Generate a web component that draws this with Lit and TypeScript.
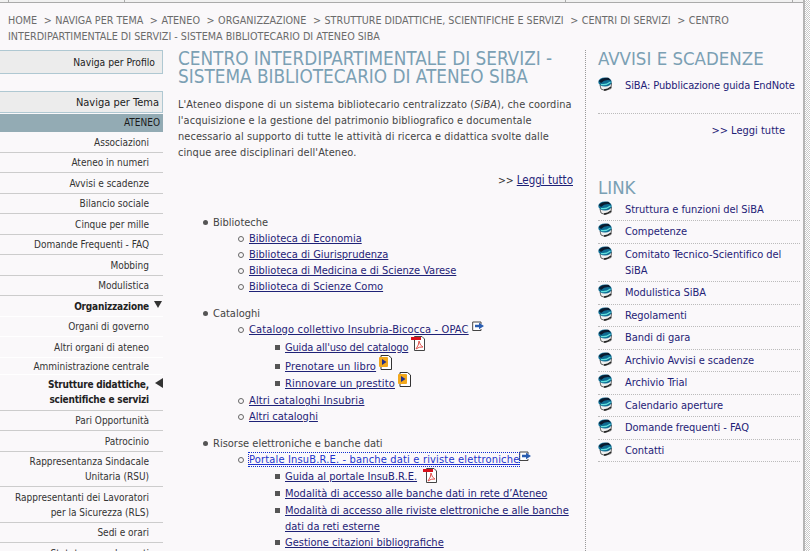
import { LitElement, html, css, svg } from "lit";
import { customElement } from "lit/decorators.js";

const globe = html`<svg class="gi" width="15" height="14" viewBox="0 0 15 14"><path d="M2 8 L3 12 L7 13.500 L13 11.500 L13.500 6Z" fill="#efefef" stroke="#555" stroke-width=".9"/><path d="M6 13 Q10 12.500 13 10" stroke="#222" stroke-width="1.300" fill="none"/><ellipse cx="7" cy="5" rx="6.700" ry="4.500" fill="#0e6d94"/><path d="M.8 4 Q4.500 .3 10.500 .8 L13 3.500 Q7 2 3 6Z" fill="#0a1c30"/><path d="M3 7.500 Q8 8.500 12.500 5" stroke="#62e0dc" stroke-width="1.200" fill="none"/></svg>`;
const pdfShape = svg`<path d="M3.500 .5H11l2.500 2.500V14.500H3.500Z" fill="#fff" stroke="#444"/><rect x="0" y="1" width="10" height="3" fill="#d8101c"/><path d="M5 13 Q8 9 8 5 Q9 10 12 11 Q8 10.500 5 13Z" fill="none" stroke="#e2534f"/>`;
const pdf = html`<svg class="ic" width="14" height="15" viewBox="0 0 14 15">${pdfShape}</svg>`;
const pdfLow = html`<svg class="ic low" width="14" height="15" viewBox="0 0 14 15">${pdfShape}</svg>`;
const ext = html`<svg class="ic ex" width="13" height="11" viewBox="0 0 13 11"><path d="M9 3V1H.7V9.500H9V8" fill="#fff" stroke="#444"/><path d="M3 3.800H7V1.800L12 5 7 8.200V6.200H3Z" fill="#2a5db0"/></svg>`;
const gold = html`<svg class="ic" width="13" height="15" viewBox="0 0 13 15"><path d="M2 .5H9.500L12.500 3V14.500H2Z" fill="#fff" stroke="#333"/><rect x="0" y="2" width="9" height="10" rx="1" fill="#f2a81d"/><path d="M3 4L7.500 7 3 10Z" fill="#23308a"/></svg>`;

const menuA = ["Associazioni","Ateneo in numeri","Avvisi e scadenze","Bilancio sociale","Cinque per mille","Domande Frequenti - FAQ","Mobbing","Modulistica"];
const menuB = ["Pari Opportunità","Patrocinio","Rappresentanza Sindacale Unitaria (RSU)","Rappresentanti dei Lavoratori per la Sicurezza (RLS)","Sedi e orari","Statuto e regolamenti"];
const links = ["Struttura e funzioni del SiBA","Competenze","Comitato Tecnico-Scientifico del SiBA","Modulistica SiBA","Regolamenti","Bandi di gara","Archivio Avvisi e scadenze","Archivio Trial","Calendario aperture","Domande frequenti - FAQ","Contatti"];
const crumbs = ["HOME","NAVIGA PER TEMA","ATENEO","ORGANIZZAZIONE","STRUTTURE DIDATTICHE, SCIENTIFICHE E SERVIZI","CENTRI DI SERVIZI","CENTRO INTERDIPARTIMENTALE DI SERVIZI - SISTEMA BIBLIOTECARIO DI ATENEO SIBA"];

@customElement("app-root")
export class AppRoot extends LitElement {
  static styles = css`
    :host { display: block; width: 810px; height: 551px; overflow: hidden; background: #faf8fa; position: relative;
      font-family: "DejaVu Sans", sans-serif; font-stretch: condensed; font-size: 11px; color: #444; }
    a { color: #1f2277; text-decoration: underline; }
    .chrome { height: 2px; border-bottom: 1px solid #aaa; background: #f1f1f1; position: relative; }
    .tick { position: absolute; top: 0; width: 1px; height: 2px; background: #aaa; }
    .scroll { position: absolute; right: 0; top: 0; bottom: 0; width: 5px; border-left: 2px solid #b5b5b5;
      background: repeating-conic-gradient(#c8c8c8 0 25%, #fff 0 50%) 0 0 / 2px 2px; }
    .crumbs { padding: 10px 40px 0 8px; height: 37px; line-height: 16px; color: #6b6b6b; font-size: 10.700px; }
    .sep { margin: 0 3.500px; }
    .cols { display: flex; align-items: stretch; }
    .side { width: 163px; flex: none; text-align: right; color: #333; font-size: 10px; }
    .box { background: #ececec; border: 1px solid #afc8d2; border-left: 0; padding-right: 7px; color: #222; }
    .b1 { height: 22px; line-height: 23px; margin-bottom: 17px; font-size: 10.250px; }
    .b2 { height: 20px; line-height: 21px; font-size: 11px; padding-right: 3px; }
    .cur { background: #93abb4; height: 18px; line-height: 18px; margin-top: 1px; padding-right: 3px; color: #1a1a1a; }
    .m { padding: 2.500px 14px 2.050px 8px; line-height: 15px; border-bottom: 1px solid #ccc; position: relative; }
    .m.nob { border-bottom-color: #fff; }
    .m.bold { font-weight: bold; color: #222; letter-spacing: -.2px; }
    .m.amm { padding-top: .5px; padding-bottom: 0; }
    .m.str { padding-bottom: 2.500px; }
    .tri { position: absolute; right: 1px; top: 5px; width: 0; height: 0; }
    .tri.d { border: 4.500px solid transparent; border-top: 7px solid #333; border-bottom: 0; }
    .tri.l { border: 5px solid transparent; border-right: 8px solid #333; border-left: 0; top: 3px; right: 0; }
    .main { width: 395px; margin-left: 15px; flex: none; }
    h1 { margin: 0; font: 400 18.800px/18px "DejaVu Sans", sans-serif; font-stretch: condensed; color: #7ba0b4; }
    .intro { margin: 11px 0 0; line-height: 16px; font-size: 10.900px; letter-spacing: .1px; white-space: nowrap; }
    .more { text-align: right; margin-top: 11px; line-height: 16px; color: #333; font-size: 10.500px; }
    .more a { font-size: 11.500px; }
    ul { margin: 0; padding: 0; list-style: none; line-height: 16px; }
    .top { margin-top: 27px; padding-left: 35px; }
    .top > li + li { margin-top: 11px; }
    .l2 { padding-left: 36px; }
    .l3 { padding-left: 36px; }
    li { position: relative; }
    li::before { content: ""; position: absolute; box-sizing: border-box; }
    .top > li::before { left: -10px; top: 5px; width: 5px; height: 5px; border-radius: 50%; background: #555; }
    .l2 > li::before { left: -11px; top: 5px; width: 6px; height: 6px; border-radius: 50%; border: 1px solid #666; }
    .l3 > li::before { left: -10px; top: 5px; width: 5px; height: 5px; background: #555; }
    .l3 > li { margin-top: 1px; }
    .l3 > li.g2 { margin-top: 2px; }
    .l3 > li.g3 { margin-top: 3px; }
    .l3 > li.g0 { margin-top: 0; }
    .last { margin-bottom: 1px; }
    .wide { letter-spacing: .15px; }
    .tight { letter-spacing: -.18px; }
    .ic { vertical-align: 2px; margin: -6px 0 -2px 0; }
    .ic.low { vertical-align: -1px; margin-left: 3px; }
    .ex { vertical-align: 3px; }
    .focus { color: #2233cc; outline: 1px dotted #1030d0; letter-spacing: .17px; }
    .right { flex: 1; margin-left: 12px; border-left: 1px dotted #999; padding: 0 10px 0 12px; height: 501px; }
    .right h1 { font-size: 18.500px; }
    .r li { display: flex; color: #1f2277; padding: 3px 0 2.500px; line-height: 16px; border-bottom: 1px dotted #bbb; letter-spacing: -.05px; }
    .r li::before { display: none; }
    .r .gi { flex: none; margin: -1px 12px 0 0; }
    .r .t { flex: 1; }
    .notice { margin-top: 7px; }
    .notice li { padding-bottom: 19px; letter-spacing: -.1px; }
    .r2 { text-align: right; margin-top: 9px; padding-right: 15px; color: #1f2277; line-height: 16px; font-size: 11px; }
    .link { margin-top: 40px; }
    .linklist { margin-top: 1.500px; }
  `;
  render() {
    return html`
      <div class="chrome">
        <span class="tick" style="left:8px"></span><span class="tick" style="left:124px"></span>
        <span class="tick" style="left:565px"></span><span class="tick" style="left:792px"></span>
      </div>
      <div class="scroll"></div>
      <div class="crumbs">${crumbs.map((c, i) => html`${i ? html`<span class="sep">&gt;</span>` : ""}${c} `)}</div>
      <div class="cols">
        <nav class="side">
          <div class="box b1">Naviga per Profilo</div>
          <div class="box b2">Naviga per Tema</div>
          <div class="cur">ATENEO</div>
          ${menuA.map((m) => html`<div class="m">${m}</div>`)}
          <div class="m bold nob">Organizzazione<span class="tri d"></span></div>
          <div class="m nob">Organi di governo</div>
          <div class="m nob">Altri organi di ateneo</div>
          <div class="m nob amm">Amministrazione centrale</div>
          <div class="m bold str">Strutture didattiche,<br />scientifiche e servizi<span class="tri l"></span></div>
          ${menuB.map((m) => html`<div class="m">${m}</div>`)}
        </nav>
        <main class="main">
          <h1>CENTRO INTERDIPARTIMENTALE DI SERVIZI - SISTEMA BIBLIOTECARIO DI ATENEO SIBA</h1>
          <p class="intro">L'Ateneo dispone di un sistema bibliotecario centralizzato (<i>SiBA</i>), che coordina<br />l'acquisizione e la gestione del patrimonio bibliografico e documentale<br />necessario al supporto di tutte le attività di ricerca e didattica svolte dalle<br />cinque aree disciplinari dell'Ateneo.</p>
          <div class="more">&gt;&gt; <a href="#">Leggi tutto</a></div>
          <ul class="top">
            <li>Biblioteche
              <ul class="l2">
                <li><a href="#">Biblioteca di Economia</a></li>
                <li><a href="#">Biblioteca di Giurisprudenza</a></li>
                <li><a href="#">Biblioteca di Medicina e di Scienze Varese</a></li>
                <li><a href="#">Biblioteca di Scienze Como</a></li>
              </ul></li>
            <li>Cataloghi
              <ul class="l2">
                <li><a href="#" class="wide">Catalogo collettivo Insubria-Bicocca - OPAC</a> ${ext}
                  <ul class="l3">
                    <li class="g2"><a href="#" class="tight">Guida all'uso del catalogo</a> ${pdf}</li>
                    <li class="g3"><a href="#" class="wide">Prenotare un libro</a> ${gold}</li>
                    <li class="last"><a href="#" class="wide">Rinnovare un prestito</a> ${gold}</li>
                  </ul></li>
                <li><a href="#" class="wide">Altri cataloghi Insubria</a></li>
                <li><a href="#">Altri cataloghi</a></li>
              </ul></li>
            <li>Risorse elettroniche e banche dati
              <ul class="l2">
                <li><a href="#" class="focus">Portale InsuB.R.E. - banche dati e riviste elettroniche</a>${ext}
                  <ul class="l3">
                    <li><a href="#">Guida al portale InsuB.R.E.</a> ${pdfLow}</li>
                    <li><a href="#">Modalità di accesso alle banche dati in rete d’Ateneo</a></li>
                    <li><a href="#">Modalità di accesso alle riviste elettroniche e alle banche dati da reti esterne</a></li>
                    <li class="g0"><a href="#">Gestione citazioni bibliografiche</a></li>
                  </ul></li>
              </ul></li>
          </ul>
        </main>
        <aside class="right">
          <h1>AVVISI E SCADENZE</h1>
          <ul class="r notice">
            <li>${globe}<span class="t">SiBA: Pubblicazione guida EndNote</span></li>
          </ul>
          <div class="r2">&gt;&gt; Leggi tutte</div>
          <h1 class="link">LINK</h1>
          <ul class="r linklist">
            ${links.map((l) => html`<li>${globe}<span class="t">${l}</span></li>`)}
          </ul>
        </aside>
      </div>`;
  }
}
